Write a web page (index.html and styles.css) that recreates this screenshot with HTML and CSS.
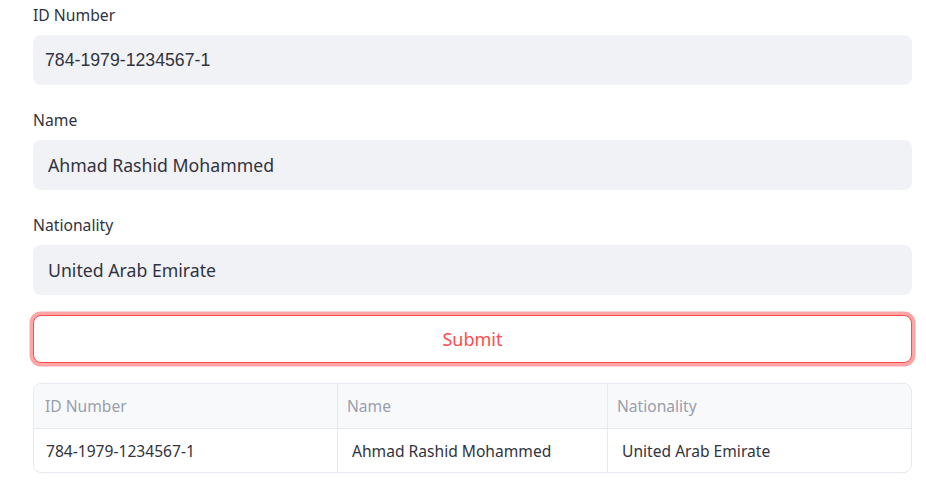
FILE: index.html
```html
<!DOCTYPE html>
<html lang="en">
<head>
<meta charset="utf-8">
<title>ID Form</title>
<link rel="stylesheet" href="styles.css">
</head>
<body>
<main class="page">
  <div class="field">
    <label class="label">ID Number</label>
    <div class="input input-id">784-1979-1234567-1</div>
  </div>
  <div class="field">
    <label class="label">Name</label>
    <div class="input">Ahmad Rashid Mohammed</div>
  </div>
  <div class="field">
    <label class="label">Nationality</label>
    <div class="input">United Arab Emirate</div>
  </div>
  <button class="submit" type="button">Submit</button>
  <div class="table">
    <div class="cell head c1">ID Number</div>
    <div class="cell head c2">Name</div>
    <div class="cell head c3">Nationality</div>
    <div class="cell data c1">784-1979-1234567-1</div>
    <div class="cell data c2">Ahmad Rashid Mohammed</div>
    <div class="cell data c3">United Arab Emirate</div>
  </div>
</main>
</body>
</html>
```

FILE: styles.css
```css
* { box-sizing: border-box; }
html, body { margin: 0; padding: 0; background: #ffffff; }
body {
  font-family: "Noto Sans", "Open Sans", sans-serif;
  color: #31333f;
}
.page {
  width: 879px;
  margin-left: 33px;
  display: flex;
  flex-direction: column;
}
.field {
  display: flex;
  flex-direction: column;
  margin-bottom: 20px;
}
.label {
  height: 35px;
  line-height: 30px;
  font-size: 15.7px;
  color: #31333f;
}
.input {
  height: 50px;
  border-radius: 8px;
  background: #f0f2f6;
  padding-left: 15px;
  display: flex;
  align-items: center;
  font-size: 17.7px;
  color: #31333f;
}
.input-id {
  font-family: "Liberation Sans", Arial, sans-serif;
  padding-left: 12px;
}
.submit {
  height: 48px;
  width: 100%;
  border: 1px solid #ff4b4b;
  border-radius: 8px;
  background: #ffffff;
  box-shadow: 0 0 0 3.5px rgba(255, 75, 75, 0.5);
  color: #ff4b4b;
  font-family: "Noto Sans", "Open Sans", sans-serif;
  font-size: 18px;
  margin-bottom: 20px;
  padding: 0;
}
.table {
  display: grid;
  grid-template-columns: 304px 270px 1fr;
  border: 1px solid #e6e9ef;
  border-radius: 8px;
  overflow: hidden;
  font-size: 15.6px;
}
.cell {
  display: flex;
  align-items: center;
  border-right: 1px solid #e6e9ef;
}
.cell.c3 { border-right: none; }
.head {
  height: 45px;
  background: #f8f9fb;
  color: #9a9eab;
  border-bottom: 1px solid #e6e9ef;
}
.data {
  height: 43px;
  color: #31333f;
}
.head.c1 { padding-left: 11px; }
.head.c2 { padding-left: 9px; }
.head.c3 { padding-left: 9px; }
.data.c1 { padding-left: 12px; }
.data.c2 { padding-left: 14px; }
.data.c3 { padding-left: 14px; }
```
